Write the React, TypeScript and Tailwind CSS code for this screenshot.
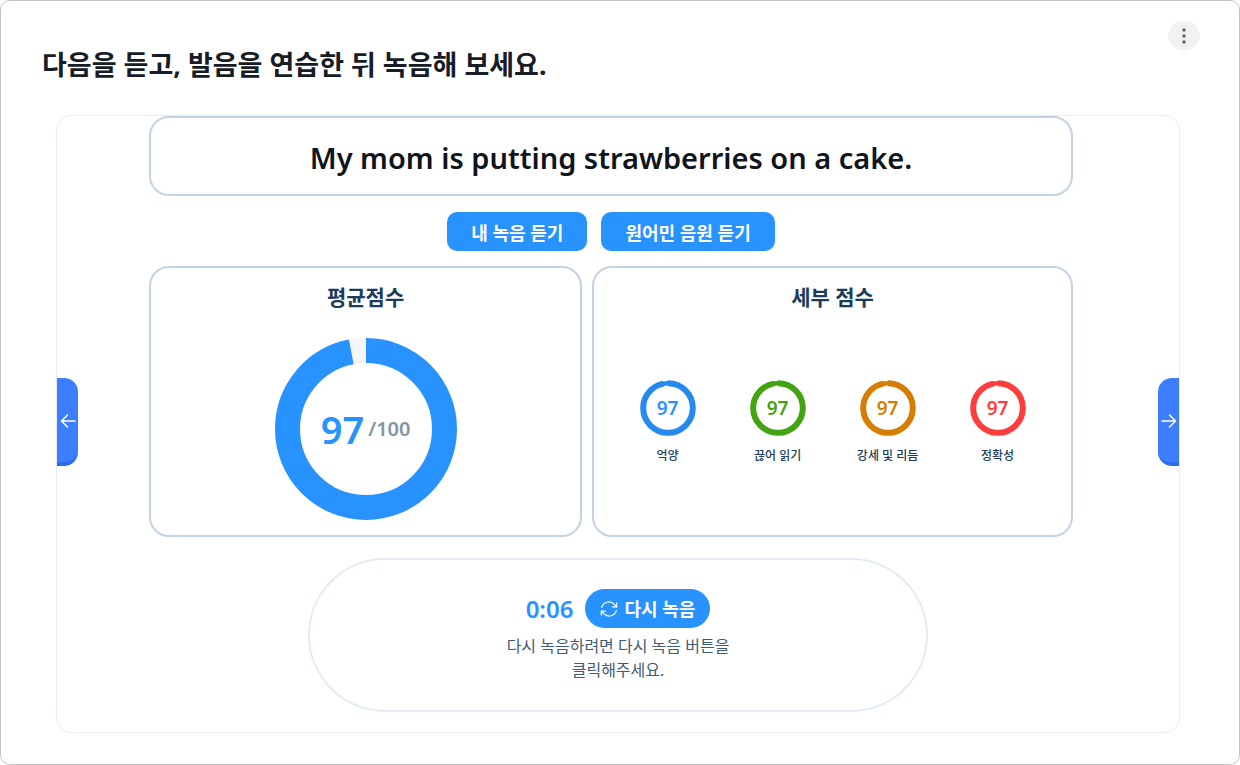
import React from 'react';

interface DetailScore {
  label: string;
  value: number;
  ring: string;
  text: string;
}

const DETAILS: DetailScore[] = [
  { label: '억양', value: 97, ring: '#2589ee', text: 'text-[#2892ff]' },
  { label: '끊어 읽기', value: 97, ring: '#43a310', text: 'text-[#43a310]' },
  { label: '강세 및 리듬', value: 97, ring: '#d67d06', text: 'text-[#d67d06]' },
  { label: '정확성', value: 97, ring: '#ff3d3d', text: 'text-[#ff3d3d]' },
];

const UI = {
  CARD: 'rounded-[20px] border-2 border-[#c3d3e3] bg-white',
  TITLE: 'text-center text-[21px] leading-7 font-bold text-[#1d3c5a]',
  PLAY: 'flex h-[39px] items-center rounded-[10px] bg-[#2892ff] px-6 pt-0.5 text-[18px] leading-6 font-bold text-white',
  TAB: 'mb-1 flex h-[88px] w-[21px] shrink-0 items-center justify-center border-b-4 border-[#2f6ce8] bg-[#3d7eff] pt-0.5 text-white',
};

const AverageRing: React.FC<{ value: number }> = ({ value }) => (
  <svg className="col-start-1 row-start-1 size-[182px]" viewBox="0 0 182 182" fill="none" strokeWidth="25">
    <circle cx="91" cy="91" r="78.5" stroke="#f4f6fb" />
    <circle cx="91" cy="91" r="78.5" stroke="#2892ff" pathLength="100" strokeDasharray={`${value} 100`} transform="rotate(-90 91 91)" />
  </svg>
);

const SmallRing: React.FC<{ value: number; color: string }> = ({ value, color }) => (
  <svg className="col-start-1 row-start-1 size-14" viewBox="0 0 56 56" fill="none">
    <circle cx="28" cy="28" r="24.8" stroke={color} strokeWidth="4.6" />
    <circle cx="28" cy="28" r="24.8" stroke={color} strokeWidth="6" pathLength="100" strokeDasharray={`${value} 100`} transform="rotate(-90 28 28)" />
  </svg>
);

const App: React.FC = () => (
  <main className="flex min-h-screen flex-col rounded-[10px] border border-[#c4c4c4] bg-white pr-[59px] pb-[31px] pl-[55px] font-['Noto_Sans','Noto_Sans_CJK_KR',sans-serif]">
    <header className="-mr-5 -ml-[14px] flex items-start justify-between pt-5">
      <h1 className="mt-6 text-[27px] leading-10 font-bold text-[#171c26]">다음을 듣고, 발음을 연습한 뒤 녹음해 보세요.</h1>
      <button type="button" aria-label="더보기" className="flex h-[29px] w-8 items-center justify-center rounded-full bg-[#f2f2f2]">
        <svg className="h-4 w-1" viewBox="0 0 4 16" fill="#63637e">
          <circle cx="2" cy="2" r="1.7" />
          <circle cx="2" cy="8" r="1.7" />
          <circle cx="2" cy="14" r="1.7" />
        </svg>
      </button>
    </header>

    <section className="mt-[30px] flex grow items-center overflow-hidden rounded-2xl border border-[#e6eff7]">
      <button type="button" aria-label="이전" className={`${UI.TAB} rounded-r-[14px]`}>
        <svg className="size-4" viewBox="0 0 16 16" fill="none" stroke="currentColor" strokeWidth="1.5" strokeLinecap="round" strokeLinejoin="round">
          <path d="M15 8H1.5M7.5 2L1.5 8l6 6" />
        </svg>
      </button>

      <div className="flex grow flex-col self-stretch">
        <div className="flex flex-col pr-[85px] pl-[71px]">
          <div className={`${UI.CARD} flex h-20 items-center justify-center pt-1`}>
            <p className="text-[29px] leading-10 font-semibold text-[#10141b]">My mom is putting strawberries on a cake.</p>
          </div>

          <div className="mt-4 flex justify-center gap-[14px]">
            <button type="button" className={UI.PLAY}>내 녹음 듣기</button>
            <button type="button" className={UI.PLAY}>원어민 음원 듣기</button>
          </div>

          <div className="mt-[15px] flex h-[271px] gap-[10px]">
            <div className={`${UI.CARD} flex flex-[9] flex-col items-center pt-[15px]`}>
              <h2 className={UI.TITLE}>평균점수</h2>
              <div className="mt-[27px] grid place-items-center">
                <AverageRing value={97} />
                <p className="col-start-1 row-start-1 flex items-center gap-1 font-semibold">
                  <span className="text-[38px] leading-10 text-[#2892ff]">97</span>
                  <span className="text-[20px] leading-6 text-[#8495a3]">/100</span>
                </p>
              </div>
            </div>

            <div className={`${UI.CARD} flex flex-[10] flex-col items-center pt-[15px]`}>
              <h2 className={UI.TITLE}>세부 점수</h2>
              <ul className="mt-[69px] grid w-[440px] grid-cols-4">
                {DETAILS.map(d => (
                  <li key={d.label} className="flex flex-col items-center">
                    <div className="grid place-items-center">
                      <SmallRing value={d.value} color={d.ring} />
                      <span className={`col-start-1 row-start-1 text-[19px] leading-6 font-semibold ${d.text}`}>{d.value}</span>
                    </div>
                    <span className="mt-[10px] text-[12px] leading-5 font-medium text-[#1d3c5a]">{d.label}</span>
                  </li>
                ))}
              </ul>
            </div>
          </div>
        </div>

        <div className="mx-auto mt-[21px] mb-5 flex h-[154px] w-[620px] flex-col items-center rounded-full border-2 border-[#e2ebf5] pt-[29px]">
          <div className="flex items-center gap-3">
            <span className="text-[24px] leading-8 font-semibold text-[#2892ff]">0:06</span>
            <button type="button" className="flex h-[39px] items-center gap-[6px] rounded-full bg-[#2892ff] px-[15px] text-[18px] leading-6 font-bold text-white">
              <svg className="size-[18px]" viewBox="0 0 18 18" fill="none" stroke="currentColor" strokeWidth="1.2" strokeLinecap="round" strokeLinejoin="round">
                <path d="M12.7 6.9h4V2.9" />
                <path d="M5.3 11.1h-4v4" />
                <path d="M1.7 7.4A7.5 7.5 0 0 1 14.3 4.3l2.4 2.6" />
                <path d="M16.3 10.6A7.5 7.5 0 0 1 3.7 13.7l-2.4-2.6" />
              </svg>
              다시 녹음
            </button>
          </div>
          <p className="mt-[6px] text-center text-[16px] leading-6 text-[#3f5b74]">
            다시 녹음하려면 다시 녹음 버튼을
            <br />
            클릭해주세요.
          </p>
        </div>
      </div>

      <button type="button" aria-label="다음" className={`${UI.TAB} rounded-l-[14px]`}>
        <svg className="size-4" viewBox="0 0 16 16" fill="none" stroke="currentColor" strokeWidth="1.5" strokeLinecap="round" strokeLinejoin="round">
          <path d="M1 8h13.5M8.5 2l6 6-6 6" />
        </svg>
      </button>
    </section>
  </main>
);

export default App;
